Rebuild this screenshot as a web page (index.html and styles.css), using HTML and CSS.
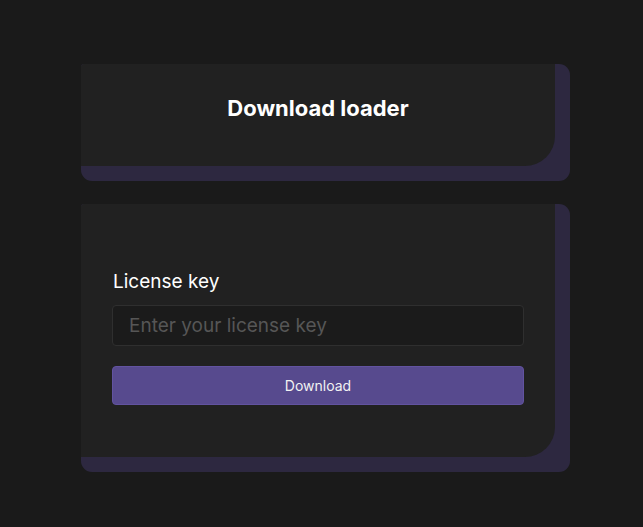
FILE: index.html
```html
<!DOCTYPE html>
<html lang="en">
<head>
<meta charset="utf-8">
<title>Download loader</title>
<link rel="stylesheet" href="styles.css">
</head>
<body>
<main class="page">
  <section class="frame">
    <div class="card card-head">
      <h1 class="title">Download loader</h1>
    </div>
  </section>
  <section class="frame">
    <div class="card card-form">
      <label class="label" for="key">License key</label>
      <input class="input" id="key" type="text" placeholder="Enter your license key">
      <button class="button" type="button">Download</button>
    </div>
  </section>
</main>
</body>
</html>
```
FILE: styles.css
```css
* { box-sizing: border-box; }
html, body {
  margin: 0;
  padding: 0;
  background: #1a1a1a;
  height: 100%;
}
body {
  font-family: "Inter", "Roboto", "Noto Sans", sans-serif;
  color: #ffffff;
}
.page {
  display: flex;
  flex-direction: column;
  gap: 23px;
  padding: 64px 0 0 81px;
  width: 570px;
}
.frame {
  background: #2d2840;
  border-radius: 3px 11px 11px 11px;
  padding: 0 15px 15px 0;
}
.card {
  background: #212121;
  border-radius: 3px 0 30px 0;
}
.card-head {
  height: 102px;
  display: flex;
  align-items: center;
  justify-content: center;
  padding-bottom: 14px;
}
.title {
  margin: 0;
  font-size: 22px;
  font-weight: 700;
  letter-spacing: 0;
}
.card-form {
  height: 253px;
  display: flex;
  flex-direction: column;
  padding: 66px 31px 0 31px;
}
.label {
  font-size: 19px;
  line-height: 24px;
  margin: 0 0 11px 1px;
  color: #ffffff;
}
.input {
  height: 41px;
  background: #1b1b1b;
  border: 1px solid #2f2f2f;
  border-radius: 4px;
  padding: 0 16px;
  font-family: inherit;
  font-size: 19px;
  color: #ddd;
  outline: none;
}
.input::placeholder { color: #565656; }
.button {
  margin-top: 20px;
  height: 39px;
  background: #574a8e;
  border: 1px solid #6253a0;
  border-radius: 4px;
  color: #f2f2f2;
  font-family: inherit;
  font-size: 14px;
}
```
